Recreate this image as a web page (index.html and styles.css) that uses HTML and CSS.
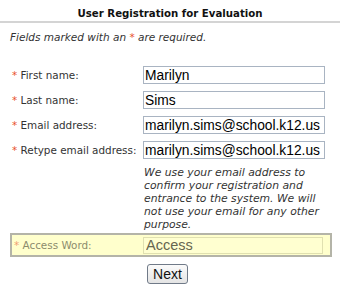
FILE: index.html
```html
<!DOCTYPE html>
<html lang="en">

<head>
    <meta charset="UTF-8">
    <title>User Registration for Evaluation</title>
    <link rel="stylesheet" href="styles.css">
</head>

<body>
    <div class="reg-panel">
        <h1>User Registration for Evaluation</h1>
        <p class="note">Fields marked with an <span class="req">*</span> are required.</p>

        <div class="reg-form">
            <div class="row">
                <label><span class="req">*</span> First name:</label>
                <input type="text" value="Marilyn">
            </div>
            <div class="row">
                <label><span class="req">*</span> Last name:</label>
                <input type="text" value="Sims">
            </div>
            <div class="row">
                <label><span class="req">*</span> Email address:</label>
                <input type="text" value="marilyn.sims@school.k12.us">
            </div>
            <div class="row">
                <label><span class="req">*</span> Retype email address:</label>
                <input type="text" value="marilyn.sims@school.k12.us">
            </div>
            <div class="row help-row">
                <span></span>
                <p class="help">We use your email address to confirm your registration and entrance to the system. We will not use your email for any other purpose.</p>
            </div>
            <div class="row access">
                <label><span class="req">*</span> Access Word:</label>
                <input type="text" value="Access">
            </div>
            <div class="row">
                <span></span>
                <div><button>Next</button></div>
            </div>
        </div>
    </div>
</body>

</html>
```

FILE: styles.css
```css
body {
    margin: 0;
    background: white;
    font-family: "DejaVu Sans", Verdana, sans-serif;
    color: #333;
}

.reg-panel {
    width: 340px;
}

h1 {
    margin: 0;
    height: 21px;
    line-height: 28px;
    font-size: 10.2px;
    text-align: center;
    color: #111;
    border-bottom: 2px solid #d4d4d4;
}

.note {
    margin: 8px 0 0 10px;
    font-size: 10.5px;
    font-style: italic;
}

.req {
    color: #e8502c;
}

.reg-form {
    margin-top: 23px;
    padding: 0 10px;
}

.row {
    display: grid;
    grid-template-columns: 133px 182px;
    align-items: center;
    margin-bottom: 7px;
}

.row label {
    font-size: 10.4px;
    padding-left: 2px;
    white-space: nowrap;
}

input {
    box-sizing: border-box;
    width: 182px;
    height: 18px;
    margin: 0;
    padding: 0 1px;
    border: 1px solid #a9b4c2;
    font-family: "Liberation Sans", Arial, sans-serif;
    font-size: 13.8px;
    color: #000;
}

.help-row {
    margin-bottom: 2px;
}

.help {
    margin: 0 0 0 1px;
    font-size: 10.8px;
    line-height: 13px;
    font-style: italic;
}

.row.access {
    height: 20px;
    margin-right: -2px;
    border: 2px solid #b4b4a8;
    background: #ffffcc;
    grid-template-columns: 131px 180px;
}

.access label {
    color: #8c8c6c;
}

.access .req {
    color: #f0a070;
}

.access input {
    width: 180px;
    height: 17px;
    padding-left: 2px;
    background: #ffffd0;
    border-color: #e0e0b0;
    color: #66664f;
    font-size: 14.5px;
}

button {
    margin: 0 0 0 4px;
    height: 20px;
    width: 41px;
    padding: 0;
    font-family: "Liberation Sans", Arial, sans-serif;
    font-size: 14px;
    color: #111;
    background: linear-gradient(#fbfbfb, #e4e4e4);
    border: 1px solid #707a88;
    border-radius: 3px;
}
```
